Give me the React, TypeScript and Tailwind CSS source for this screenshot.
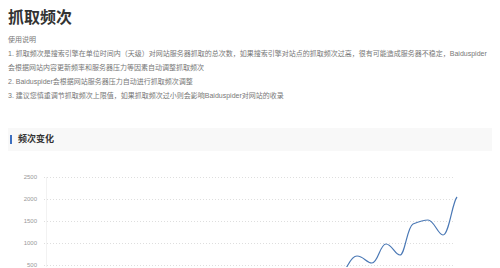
import React from "react";

const ticks = [
  { v: "2500", y: 26 },
  { v: "2000", y: 48 },
  { v: "1500", y: 70 },
  { v: "1000", y: 92 },
  { v: "500", y: 114 },
];

export default function App() {
  return (
    <div
      className="w-[500px] h-[268px] overflow-hidden bg-white px-[8px]"
      style={{ fontFamily: '"Liberation Sans", "Noto Sans CJK SC", sans-serif' }}
    >
      <h1 className="pt-[8px] text-[16px] leading-[20px] font-bold text-[#333]">抓取频次</h1>
      <div className="mt-[5px] text-[7px] leading-[14px] text-[#777] w-[484px]">
        <p>使用说明</p>
        <p>
          1. 抓取频次是搜索引擎在单位时间内（天级）对网站服务器抓取的总次数，如果搜索引擎对站点的抓取频次过高，很有可能造成服务器不稳定，Baiduspider会根据网站内容更新频率和服务器压力等因素自动调整抓取频次
        </p>
        <p>2. Baiduspider会根据网站服务器压力自动进行抓取频次调整</p>
        <p>3. 建议您慎重调节抓取频次上限值，如果抓取频次过小则会影响Baiduspider对网站的收录</p>
      </div>
      <div className="mt-[25px] h-[23px] w-[484px] bg-[#f8f8f8] flex items-center pl-[2px] gap-[6px]">
        <div className="w-[2px] h-[9px] bg-[#3d6fc0]" />
        <span className="text-[9px] font-bold text-[#333]">频次变化</span>
      </div>
      <svg width="500" height="116" className="-ml-[8px] block" viewBox="0 0 500 116">
        <line x1="46.5" y1="26" x2="46.5" y2="116" stroke="#f2f2f2" strokeWidth="1" />
        {ticks.map((t) => (
          <g key={t.v}>
            <line x1="44" y1={t.y + 0.5} x2="455" y2={t.y + 0.5} stroke="#dedede" strokeWidth="1" strokeDasharray="1 2" />
            <text x="37" y={t.y} textAnchor="end" dominantBaseline="middle" fontSize="6" fill="#999">
              {t.v}
            </text>
          </g>
        ))}
        <path
          d="M 338,136 C 343,124 350,105 357,105 C 364,105 366,112 372,112 C 378,112 380,93 386,93 C 392,93 395,104 400,104 C 405,104 407,76 413,73 C 418,71 424,69 428,69 C 434,69 438,84 443,84 C 449,84 452,52 457,46"
          fill="none"
          stroke="#4a78b5"
          strokeWidth="1.2"
        />
      </svg>
    </div>
  );
}
